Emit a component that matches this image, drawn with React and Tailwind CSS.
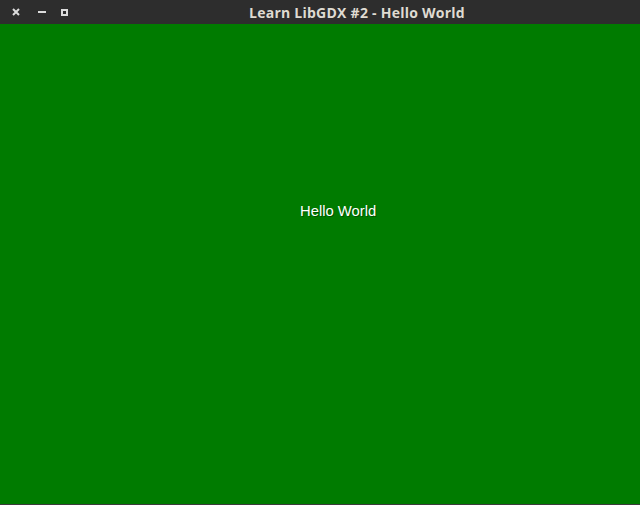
export default function App() {
  return (
    <div className="w-[640px] h-[505px] flex flex-col bg-[#3c3c3c] overflow-hidden">
      <div className="h-[24px] bg-[#2d2d2d] flex items-center relative shrink-0">
        <div className="flex items-center">
          <svg width="8" height="8" viewBox="0 0 8 8" className="ml-[12px]">
            <path d="M1 1 L7 7 M7 1 L1 7" stroke="#dcdcdc" strokeWidth="2" />
          </svg>
          <div className="w-[8px] h-[2px] bg-[#dcdcdc] ml-[18px]" />
          <div className="w-[7px] h-[7px] border-2 border-[#dcdcdc] ml-[15px]" />
        </div>
        <div className="absolute left-[249px] top-0 h-[24px] flex items-center text-[14px] font-bold text-[#dfdbd2] font-['Open_Sans',sans-serif] tracking-[0.25px]">
          Learn LibGDX #2 - Hello World
        </div>
      </div>
      <div className="h-[480px] bg-[#007b00] relative shrink-0">
        <div className="pt-[178px] pl-[300px] text-[14.8px] text-white font-['Liberation_Sans',Arial,sans-serif] leading-[18px] [text-shadow:1px_1px_0_rgba(0,0,0,0.35)]">
          Hello World
        </div>
      </div>
    </div>
  );
}
